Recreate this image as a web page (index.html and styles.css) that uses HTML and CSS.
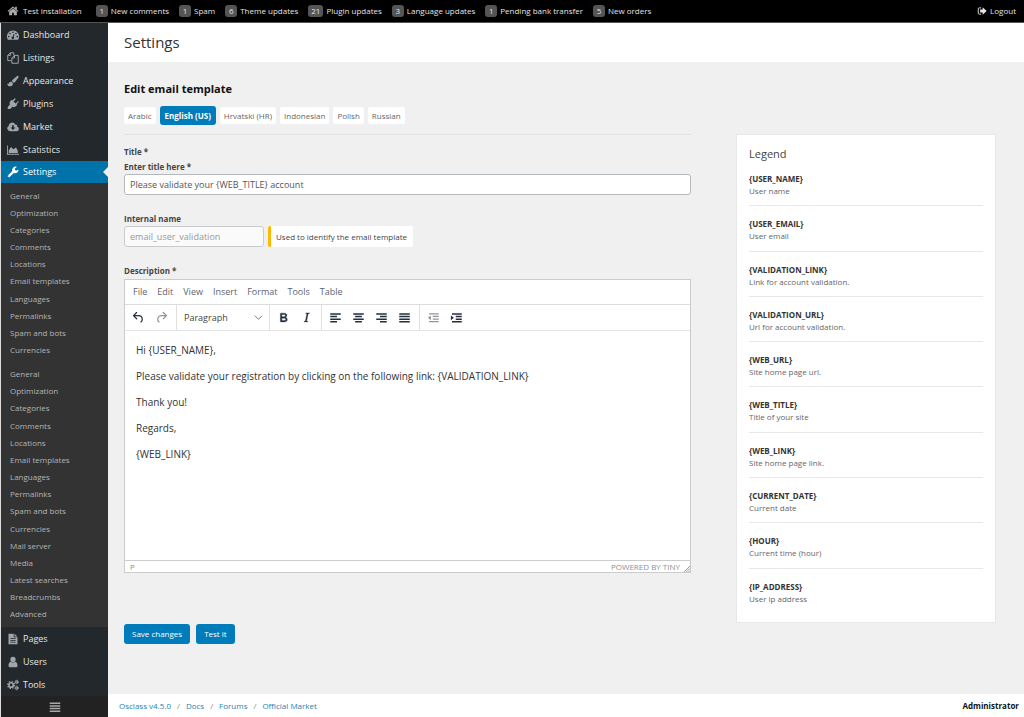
FILE: index.html
```html
<!DOCTYPE html>
<html lang="en">
<head>
<meta charset="utf-8">
<title>Settings - Edit email template</title>
<link rel="stylesheet" href="styles.css">
</head>
<body>
<svg class="sprite" aria-hidden="true">
  <symbol id="home" viewBox="0 0 1792 1792"><path d="M1472 992v480q0 26-19 45t-45 19h-384v-384h-256v384h-384q-26 0-45-19t-19-45v-480q0-1 .5-3t.5-3l575-474 575 474q1 2 1 6zm223-69l-62 74q-8 9-21 11h-3q-13 0-21-7l-692-577-692 577q-12 8-24 7-13-2-21-11l-62-74q-8-10-7-23.500t11-21.500l719-599q32-26 76-26t76 26l244 204v-195q0-14 9-23t23-9h192q14 0 23 9t9 23v408l219 182q10 8 11 21.500t-7 23.500z"/></symbol>
  <symbol id="logout" viewBox="0 0 16 16"><path d="M6.500 3H3.500Q2 3 2 4.500v7Q2 13 3.500 13h3" fill="none" stroke="currentColor" stroke-width="1.500"/><path d="M5 5.500h4V2L15.500 8 9 14v-3.500H5z"/></symbol>
  <symbol id="dash" viewBox="0 0 16 16"><path fill-rule="evenodd" d="M8 2a8 8 0 0 1 6.800 12.200H1.200A8 8 0 0 1 8 2zM8 3.300a1.100 1.100 0 1 0 0 2.200 1.100 1.100 0 0 0 0-2.200zM4 5a1.100 1.100 0 1 0 0 2.200A1.100 1.100 0 0 0 4 5zM12 5a1.100 1.100 0 1 0 0 2.200A1.100 1.100 0 0 0 12 5zM2.400 9a1.100 1.100 0 1 0 0 2.200 1.100 1.100 0 0 0 0-2.200zM13.600 9a1.100 1.100 0 1 0 0 2.200 1.100 1.100 0 0 0 0-2.200zM8.900 6.800L7.700 10a1.700 1.700 0 1 0 1.200.4l1.100-3.200z"/></symbol>
  <symbol id="copy" viewBox="0 0 16 16"><path d="M4.500 1H9v3.500M1 4.500L4.500 1v3.500H1v7h5M10 4.500h5V15H6.500V8L10 4.500V8H6.500" fill="none" stroke="currentColor" stroke-width="1.300" stroke-linejoin="round"/></symbol>
  <symbol id="brush" viewBox="0 0 16 16"><path d="M14.200 1q1.300 0 1.300 1.200 0 .7-.5 1.500l-4 5.300q-1 1.200-2.200 1.600Q8.200 9 6.400 8.200q.3-1 1.200-1.900L13 1.500q.6-.5 1.200-.5zM5.600 9.100q2 .6 2.300 2.500-.2 3.400-3.900 3.400-3.200 0-3.700-3.800 1.200.8 1.800.4.500-.3.700-1 .7-1.700 2.800-1.500z"/></symbol>
  <symbol id="plug" viewBox="0 0 16 16"><path d="M15.500 4.500q.4.700-.2 1.200L12.700 8.300l1 1-1.400 1.400q-2.300 2.200-5.200 1.100L4.500 14.500H1v-3l2.700-2.600Q2.600 6 4.900 3.800l1.500-1.500 1 1L10 .7q.7-.5 1.200 0t0 1.200L8.700 4.500l2.900 2.800 2.600-2.600q.7-.5 1.300-.2z"/></symbol>
  <symbol id="cloud" viewBox="0 0 16 16"><path fill-rule="evenodd" d="M4 13.500a3.700 3.700 0 0 1-1.800-6.900 4.700 4.700 0 0 1 8.800-2 2.400 2.400 0 0 1 2.600 3 3 3 0 0 1-.7 5.900zM6.800 5.500v3H4.700L8 12l3.300-3.500H9.100v-3z"/></symbol>
  <symbol id="area" viewBox="0 0 16 16"><path d="M0 2h1.200v11H16v1.200H0zM2.300 12V8.500L5.300 4l3.200 3L12 4.500l2.300 4V12z"/></symbol>
  <symbol id="wrench" viewBox="0 0 16 16"><path fill-rule="evenodd" d="M9 9.200l-5.400 5.500q-1.100.9-2.200-.1t0-2.300L6.900 7Q6.100 4.100 8.300 2q2.200-1.800 5-.9L10.600 3.200v1.800l1.600 1.200L15.100 4.500q.6 2.500-1.400 4.200-2 1.600-4.700.5zM2.600 12.700a.6.600 0 1 0 .1 1.100.6.600 0 0 0-.1-1.100z"/></symbol>
  <symbol id="file" viewBox="0 0 16 16"><path fill-rule="evenodd" d="M2 1h7v4.500h5V15H2zM10 1l4 3.700h-4zM4.500 7v1h7V7zm0 2.300v1h7v-1zm0 2.300v1h7v-1z"/></symbol>
  <symbol id="user" viewBox="0 0 16 16"><circle cx="8" cy="4.500" r="3.500"/><path d="M5 7.500q3 2.200 6 0 3 .8 3 5.500 0 2-2 2H4q-2 0-2-2 0-4.700 3-5.500z"/></symbol>
  <symbol id="cogs" viewBox="0 0 16 16"><g fill="none" stroke="currentColor"><circle cx="5.500" cy="8" r="3" stroke-width="2.200"/><circle cx="5.500" cy="8" r="4.700" stroke-width="1.400" stroke-dasharray="1.800 1.900"/><circle cx="13" cy="4" r="1.500" stroke-width="1.400"/><circle cx="13" cy="4" r="2.500" stroke-width="1" stroke-dasharray="1.200 1.400"/><circle cx="13" cy="12" r="1.500" stroke-width="1.400"/><circle cx="13" cy="12" r="2.500" stroke-width="1" stroke-dasharray="1.200 1.400"/></g></symbol>
  <symbol id="bars" viewBox="0 0 16 16"><path d="M1 2h14v2H1zM1 5.500h14v2H1zM1 9h14v2H1zM1 12.500h14v2H1z"/></symbol>
  <symbol id="undo" viewBox="0 0 24 24"><path d="M6.400 8H12c3.700 0 6.200 2 6.800 5.100.6 2.700-.4 5.600-2.300 6.800a1 1 0 0 1-1-1.800c1.100-.6 1.800-2.700 1.400-4.600-.5-2.100-2.100-3.500-4.900-3.500H6.400l3.300 3.300a1 1 0 1 1-1.400 1.400l-5-5a1 1 0 0 1 0-1.400l5-5a1 1 0 0 1 1.400 1.400L6.400 8z"/></symbol>
  <symbol id="redo" viewBox="0 0 24 24"><path d="M17.600 10H12c-2.800 0-4.400 1.400-4.900 3.500-.4 2 .3 4 1.400 4.600a1 1 0 1 1-1 1.800c-2-1.200-2.900-4.100-2.300-6.800.6-3 3-5.100 6.800-5.100h5.600l-3.300-3.300a1 1 0 1 1 1.400-1.400l5 5a1 1 0 0 1 0 1.400l-5 5a1 1 0 0 1-1.400-1.400l3.300-3.300z"/></symbol>
  <symbol id="chevron" viewBox="0 0 10 10"><path d="M1 3l4 4 4-4" fill="none" stroke="currentColor" stroke-width="1.100"/></symbol>
  <symbol id="bold" viewBox="0 0 24 24"><path d="M7.800 19c-.3 0-.5 0-.6-.2l-.2-.5V5.700c0-.2 0-.4.2-.5l.6-.2h5c1.500 0 2.700.3 3.500 1 .7.600 1.100 1.400 1.100 2.500a3 3 0 0 1-.6 1.900c-.4.600-1 1-1.600 1.200.4.100.9.300 1.300.6s.8.700 1 1.200c.4.400.5 1 .5 1.600 0 1.300-.4 2.300-1.300 3-.8.700-2.100 1-3.800 1H7.800zm5-8.300c.6 0 1.200-.1 1.600-.5.400-.3.600-.7.600-1.300 0-1.100-.8-1.700-2.300-1.700H9.300v3.500h3.400zm.5 6c.7 0 1.300-.1 1.700-.4.400-.4.600-.9.600-1.500s-.2-1-.7-1.400c-.4-.3-1-.4-2-.4H9.400v3.800h4z" fill-rule="evenodd" stroke="currentColor" stroke-width=".6"/></symbol>
  <symbol id="italic" viewBox="0 0 24 24"><path d="M16.700 4.700l-.1.900h-.3c-.6 0-1 0-1.400.3-.3.300-.4.600-.5 1.100l-2.100 9.800v.6c0 .5.400.8 1.400.8h.2l-.2.800H8l.2-.8h.2c1.100 0 1.800-.5 2-1.500l2-9.800.1-.5c0-.6-.4-.8-1.400-.8h-.3l.2-.9h5.800z" stroke="currentColor" stroke-width=".6"/></symbol>
  <symbol id="left" viewBox="0 0 16 16"><path d="M1 1.500h14v2H1zM1 5h9v2H1zM1 8.500h14v2H1zM1 12h9v2H1z"/></symbol>
  <symbol id="center" viewBox="0 0 16 16"><path d="M1 1.500h14v2H1zM3.500 5h9v2h-9zM1 8.500h14v2H1zM3.500 12h9v2h-9z"/></symbol>
  <symbol id="right" viewBox="0 0 16 16"><path d="M1 1.500h14v2H1zM6 5h9v2H6zM1 8.500h14v2H1zM6 12h9v2H6z"/></symbol>
  <symbol id="justify" viewBox="0 0 16 16"><path d="M1 1.500h14v2H1zM1 5h14v2H1zM1 8.500h14v2H1zM1 12h14v2H1z"/></symbol>
  <symbol id="outdent" viewBox="0 0 16 16"><path d="M2 1.500h13v1.700H2zM7 5h8v1.700H7zM7 8.500h8v1.700H7zM2 12h13v1.700H2zM4.500 4.500v6.500L.5 7.700z"/></symbol>
  <symbol id="indent" viewBox="0 0 16 16"><path d="M2 1.500h13v2H2zM7 5h8v2H7zM7 8.500h8v2H7zM2 12h13v2H2zM.5 4.500v6.500l4-3.300z"/></symbol>
  <symbol id="grip" viewBox="0 0 8 8"><path d="M0 8L8 0M3 8l5-5M6 8l2-2" stroke="currentColor" stroke-width="1.200"/></symbol>
</svg>

<header class="topbar">
  <a href="#" class="brand"><svg class="icon"><use href="#home"/></svg>Test installation</a>
  <a href="#"><span class="badge">1</span>New comments</a>
  <a href="#"><span class="badge">1</span>Spam</a>
  <a href="#"><span class="badge">6</span>Theme updates</a>
  <a href="#"><span class="badge">21</span>Plugin updates</a>
  <a href="#"><span class="badge">3</span>Language updates</a>
  <a href="#"><span class="badge">1</span>Pending bank transfer</a>
  <a href="#"><span class="badge">5</span>New orders</a>
  <a href="#" class="logout"><svg class="icon"><use href="#logout"/></svg>Logout</a>
</header>

<div class="shell">
  <nav class="sidebar">
    <a href="#" class="item"><svg class="icon"><use href="#dash"/></svg>Dashboard</a>
    <a href="#" class="item"><svg class="icon"><use href="#copy"/></svg>Listings</a>
    <a href="#" class="item"><svg class="icon"><use href="#brush"/></svg>Appearance</a>
    <a href="#" class="item"><svg class="icon"><use href="#plug"/></svg>Plugins</a>
    <a href="#" class="item"><svg class="icon"><use href="#cloud"/></svg>Market</a>
    <a href="#" class="item"><svg class="icon"><use href="#area"/></svg>Statistics</a>
    <a href="#" class="item current"><svg class="icon"><use href="#wrench"/></svg>Settings</a>
    <div class="submenu">
      <a href="#">General</a>
      <a href="#">Optimization</a>
      <a href="#">Categories</a>
      <a href="#">Comments</a>
      <a href="#">Locations</a>
      <a href="#">Email templates</a>
      <a href="#">Languages</a>
      <a href="#">Permalinks</a>
      <a href="#">Spam and bots</a>
      <a href="#">Currencies</a>
      <span class="split"></span>
      <a href="#">General</a>
      <a href="#">Optimization</a>
      <a href="#">Categories</a>
      <a href="#">Comments</a>
      <a href="#">Locations</a>
      <a href="#">Email templates</a>
      <a href="#">Languages</a>
      <a href="#">Permalinks</a>
      <a href="#">Spam and bots</a>
      <a href="#">Currencies</a>
      <a href="#">Mail server</a>
      <a href="#">Media</a>
      <a href="#">Latest searches</a>
      <a href="#">Breadcrumbs</a>
      <a href="#">Advanced</a>
    </div>
    <a href="#" class="item"><svg class="icon"><use href="#file"/></svg>Pages</a>
    <a href="#" class="item"><svg class="icon"><use href="#user"/></svg>Users</a>
    <a href="#" class="item"><svg class="icon"><use href="#cogs"/></svg>Tools</a>
    <button class="collapse" type="button" aria-label="Collapse menu"><svg class="icon"><use href="#bars"/></svg></button>
  </nav>

  <div class="page">
    <h1 class="page-title">Settings</h1>
    <main class="content">
      <h2 class="heading">Edit email template</h2>
      <div class="tabs">
        <button type="button">Arabic</button>
        <button type="button" class="active">English (US)</button>
        <button type="button">Hrvatski (HR)</button>
        <button type="button">Indonesian</button>
        <button type="button">Polish</button>
        <button type="button">Russian</button>
      </div>
      <div class="columns">
        <form class="form">
          <div class="field">
            <span class="label">Title *</span>
            <label class="label" for="title">Enter title here *</label>
            <input class="input" id="title" type="text" value="Please validate your {WEB_TITLE} account">
          </div>
          <div class="field">
            <label class="label" for="internal">Internal name</label>
            <div class="inline">
              <input class="input short" id="internal" type="text" value="email_user_validation" disabled>
              <span class="hint">Used to identify the email template</span>
            </div>
          </div>
          <div class="field">
            <span class="label" id="description">Description *</span>
            <div class="editor">
              <div class="menubar">
                <button type="button">File</button>
                <button type="button">Edit</button>
                <button type="button">View</button>
                <button type="button">Insert</button>
                <button type="button">Format</button>
                <button type="button">Tools</button>
                <button type="button">Table</button>
              </div>
              <div class="toolbar">
                <div class="group">
                  <button type="button" aria-label="Undo"><svg class="glyph"><use href="#undo"/></svg></button>
                  <button type="button" aria-label="Redo" disabled><svg class="glyph"><use href="#redo"/></svg></button>
                </div>
                <div class="group format">
                  <select aria-label="Blocks"><option>Paragraph</option></select>
                  <svg class="chevron"><use href="#chevron"/></svg>
                </div>
                <div class="group">
                  <button type="button" aria-label="Bold"><svg class="glyph"><use href="#bold"/></svg></button>
                  <button type="button" aria-label="Italic"><svg class="glyph"><use href="#italic"/></svg></button>
                </div>
                <div class="group">
                  <button type="button" aria-label="Align left"><svg class="lines"><use href="#left"/></svg></button>
                  <button type="button" aria-label="Align center"><svg class="lines"><use href="#center"/></svg></button>
                  <button type="button" aria-label="Align right"><svg class="lines"><use href="#right"/></svg></button>
                  <button type="button" aria-label="Justify"><svg class="lines"><use href="#justify"/></svg></button>
                </div>
                <div class="group">
                  <button type="button" aria-label="Decrease indent" disabled><svg class="lines"><use href="#outdent"/></svg></button>
                  <button type="button" aria-label="Increase indent"><svg class="lines"><use href="#indent"/></svg></button>
                </div>
              </div>
              <div class="body" contenteditable="true" role="textbox" aria-labelledby="description" spellcheck="false">
                <p>Hi {USER_NAME},</p>
                <p>Please validate your registration by clicking on the following link: {VALIDATION_LINK}</p>
                <p>Thank you!</p>
                <p>Regards,</p>
                <p>{WEB_LINK}</p>
              </div>
              <div class="status"><span>P</span><span class="powered">POWERED BY TINY</span><svg class="grip"><use href="#grip"/></svg></div>
            </div>
          </div>
          <div class="actions">
            <button type="submit">Save changes</button>
            <button type="button">Test it</button>
          </div>
        </form>
        <aside class="legend">
          <h3>Legend</h3>
          <dl>
            <div><dt>{USER_NAME}</dt><dd>User name</dd></div>
            <div><dt>{USER_EMAIL}</dt><dd>User email</dd></div>
            <div><dt>{VALIDATION_LINK}</dt><dd>Link for account validation.</dd></div>
            <div><dt>{VALIDATION_URL}</dt><dd>Url for account validation.</dd></div>
            <div><dt>{WEB_URL}</dt><dd>Site home page url.</dd></div>
            <div><dt>{WEB_TITLE}</dt><dd>Title of your site</dd></div>
            <div><dt>{WEB_LINK}</dt><dd>Site home page link.</dd></div>
            <div><dt>{CURRENT_DATE}</dt><dd>Current date</dd></div>
            <div><dt>{HOUR}</dt><dd>Current time (hour)</dd></div>
            <div><dt>{IP_ADDRESS}</dt><dd>User ip address</dd></div>
          </dl>
        </aside>
      </div>
    </main>
    <footer class="footer">
      <a href="#">Osclass v4.5.0</a><span>/</span><a href="#">Docs</a><span>/</span><a href="#">Forums</a><span>/</span><a href="#">Official Market</a>
      <strong>Administrator</strong>
    </footer>
  </div>
</div>
</body>
</html>
```
FILE: styles.css
```css
*, *::before, *::after { box-sizing: border-box; }
body {
  margin: 0;
  min-height: 100vh;
  display: flex;
  flex-direction: column;
  background: #f0f0f0;
  color: #444;
  font: 8px/12px "Segoe UI", "Open Sans", sans-serif;
}
button, input, select { font: inherit; color: inherit; margin: 0; }
button { border: 0; padding: 0; background: none; }
a { color: inherit; text-decoration: none; }
h1, h2, h3, p, dl, dd { margin: 0; }
svg { display: block; fill: currentColor; flex: none; }
.sprite { position: absolute; width: 0; height: 0; }
.icon { width: 12px; height: 12px; }

.topbar {
  display: flex;
  align-items: center;
  gap: 10px;
  height: 23px;
  padding: 0 8px 0 7px;
  background: #000;
  color: #e4e4e4;
  border-bottom: 1px solid #555;
  white-space: nowrap;
}
.topbar a { display: flex; align-items: center; gap: 3px; }
.topbar .brand { gap: 4px; margin-right: 4px; }
.brand .icon { color: #aaa; }
.badge {
  min-width: 12px;
  padding: 0 3px;
  border-radius: 3px;
  background: #555;
  text-align: center;
}
.topbar .logout { margin-left: auto; }
.logout .icon { width: 10px; height: 10px; }

.shell { display: flex; flex: 1; }
.sidebar {
  display: flex;
  flex-direction: column;
  flex: none;
  width: 108px;
  background: #23282d;
  border-left: 1px solid #ddd;
}
.item {
  display: flex;
  align-items: center;
  gap: 4px;
  height: 23px;
  padding-left: 6px;
  color: #e6e6e6;
  font-size: 9px;
}
.item .icon { color: #a0a5aa; }
.item.current { position: relative; height: 22px; background: #0073aa; color: #fff; }
.item.current .icon { color: #fff; }
.item.current::after {
  content: "";
  position: absolute;
  right: 0;
  top: 6px;
  border: 5px solid transparent;
  border-left: 0;
  border-right-color: #f0f0f0;
}
.submenu {
  display: flex;
  flex-direction: column;
  flex: 1;
  padding: 4px 0 4px 9px;
  background: #333;
  color: #b4b4b4;
}
.submenu a { display: flex; align-items: center; flex: 1; min-height: 12px; }
.split { height: 7px; }
.collapse { display: flex; align-items: center; justify-content: center; height: 21px; background: #222; color: #a8a8a8; }

.page { display: flex; flex-direction: column; flex: 1; min-width: 0; }
.page-title {
  height: 39px;
  padding-left: 16px;
  background: #fff;
  color: #333;
  font-size: 15px;
  line-height: 39px;
  font-weight: 400;
}
.content { flex: 1; padding: 19px 28px 50px 16px; }
.heading { color: #111; font-size: 11px; line-height: 16px; font-weight: 700; }
.tabs { display: flex; align-items: center; gap: 4px; height: 19px; margin: 9px 0; }
.tabs button {
  height: 17px;
  padding: 0 4px;
  background: #fff;
  border-radius: 2px;
  color: #666;
}
.tabs .active { height: 19px; padding: 0 5px; background: #007cba; color: #fff; font-weight: 700; border-radius: 3px; }
.columns { display: grid; grid-template-columns: minmax(0, 1fr) 260px; gap: 45px; }
.form { border-top: 1px solid #e2e2e2; padding-top: 9px; }
.field { margin-bottom: 16px; }
.label { display: block; font-weight: 700; line-height: 15px; }
.input {
  display: block;
  width: 100%;
  height: 21px;
  padding: 0 5px;
  border: 1px solid #b4b9be;
  border-radius: 3px;
  background: #fff;
  color: #555;
  font-size: 9px;
}
.input:disabled { background: #fafafa; color: #999; border-color: #c8ccd0; }
.inline { display: flex; gap: 4px; }
.short { width: 140px; }
.hint {
  display: flex;
  align-items: center;
  padding: 0 6px 0 5px;
  background: #fff;
  border-left: 3px solid #ffb900;
  border-radius: 2px;
}
.editor { border: 1px solid #ccc; background: #fff; margin-top: 1px; }
.menubar { display: flex; align-items: center; gap: 10px; height: 25px; padding-left: 8px; border-bottom: 1px solid #ddd; color: #5a6570; font-size: 9px; }
.toolbar { display: flex; height: 26px; border-bottom: 1px solid #e4e4e4; color: #222f3e; }
.group { display: flex; align-items: center; padding: 0 3px 0 2px; border-right: 1px solid #e0e0e0; }
.group:last-child { border-right: 0; }
.group button { display: flex; align-items: center; justify-content: center; width: 23px; height: 22px; }
.group button:disabled { opacity: .5; }
.glyph { width: 15px; height: 15px; }
.lines { width: 13px; height: 12px; }
.format { position: relative; width: 93px; color: #444; }
.format select { width: 100%; height: 22px; padding: 0 5px; border: 0; background: none; appearance: none; font-size: 9px; }
.chevron { position: absolute; right: 6px; width: 9px; height: 9px; color: #777; pointer-events: none; }
.body { min-height: 229px; padding: 11px; font-size: 10px; line-height: 16px; color: #333; outline: 0; }
.body p { margin-bottom: 10px; }
.status { display: flex; align-items: center; height: 12px; padding-left: 5px; border-top: 1px solid #ccc; color: #8a9099; line-height: 11px; }
.powered { margin-left: auto; margin-right: 4px; }
.grip { width: 6px; height: 6px; align-self: flex-end; }
.actions { display: flex; gap: 6px; padding-top: 35px; }
.actions button { height: 20px; padding: 0 8px; border-radius: 3px; background: #007cba; color: #fff; }

.legend {
  display: flex;
  flex-direction: column;
  margin-bottom: 21px;
  padding: 12px 12px 9px;
  background: #fff;
  border: 1px solid #e8e8e8;
}
.legend h3 { font-size: 11px; line-height: 14px; font-weight: 400; }
.legend dl { display: flex; flex-direction: column; flex: 1; }
.legend dl div { flex: 1; padding-top: 12px; border-bottom: 1px solid #e8e8e8; }
.legend dl div:last-child { border-bottom: 0; }
.legend dt { font-weight: 700; color: #333; }
.legend dd { color: #666; }

.footer { display: flex; align-items: center; height: 23px; padding: 0 5px 0 11px; background: #fff; color: #888; }
.footer a { color: #2583b4; }
.footer span { margin: 0 6px; }
.footer strong { margin-left: auto; color: #111; }
```
